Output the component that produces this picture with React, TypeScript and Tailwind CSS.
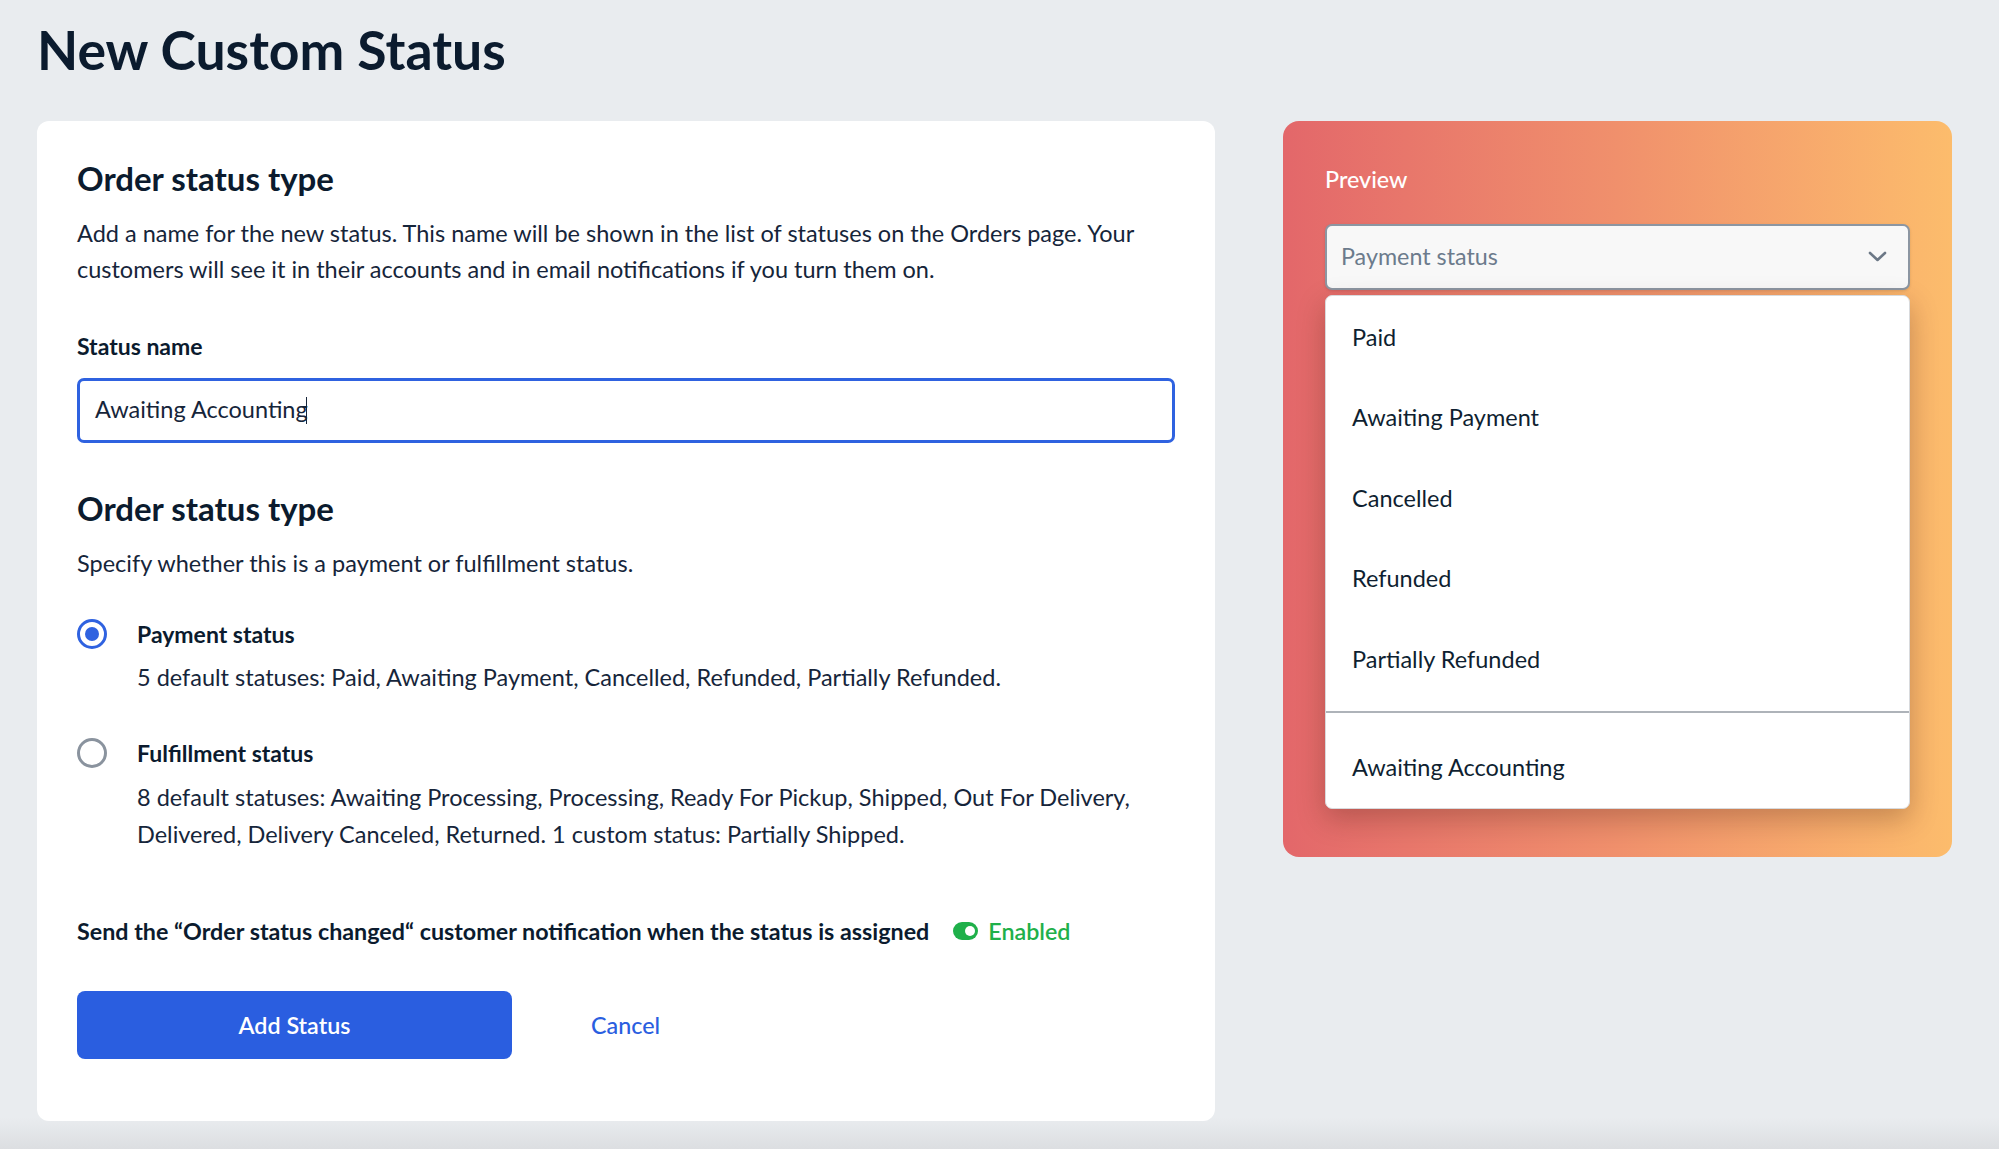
import React from "react";

const items = ["Paid", "Awaiting Payment", "Cancelled", "Refunded", "Partially Refunded"];

export default function App() {
  return (
    <div
      className="h-screen w-full overflow-hidden bg-[linear-gradient(to_bottom,#e9ecef_0%,#e9ecef_97.3%,#dcdee1_100%)] text-[#16253a]"
      style={{ fontFamily: "Lato, 'Open Sans', 'Liberation Sans', sans-serif" }}
    >
      <div className="pl-[37px] pt-[23px]">
        <h1 className="text-[53.5px] font-bold leading-none text-[#0b1b2e]">New Custom Status</h1>
      </div>

      <div className="mt-[44px] flex items-start gap-[68px] pl-[37px]">
        {/* Left card */}
        <div className="h-[1000px] w-[1178px] rounded-[12px] bg-white px-[40px] pt-[39px]">
          <h2 className="text-[33px] font-bold leading-[36px] text-[#0b1b2e]">Order status type</h2>
          <p className="mt-[19px] text-[23.5px] leading-[36px]">
            Add a name for the new status. This name will be shown in the list of statuses on the Orders page. Your
            customers will see it in their accounts and in email notifications if you turn them on.
          </p>

          <div className="mt-[41px] text-[23px] font-bold leading-[36px] text-[#0b1b2e]">Status name</div>
          <div className="mt-[14px] flex h-[65px] w-full items-center rounded-[7px] border-[3px] border-[#2f62e0] pl-[15px] text-[23.5px]">
            <span>Awaiting Accounting</span>
            <span className="-ml-[2px] inline-block h-[27px] w-[1.5px] bg-[#16253a]" />
          </div>

          <h2 className="mt-[47px] text-[33px] font-bold leading-[36px] text-[#0b1b2e]">Order status type</h2>
          <p className="mt-[19.5px] text-[23.5px] leading-[36px]">Specify whether this is a payment or fulfillment status.</p>

          {/* Radio 1 */}
          <div className="mt-[35px] flex items-start">
            <div className="flex h-[36px] w-[30px] items-center">
              <div className="flex h-[30px] w-[30px] items-center justify-center rounded-full border-[3px] border-[#2f62e0]">
                <div className="h-[14px] w-[14px] rounded-full bg-[#2f62e0]" />
              </div>
            </div>
            <div className="ml-[30px]">
              <div className="text-[23px] font-bold leading-[36px] text-[#0b1b2e]">Payment status</div>
              <div className="mt-[7px] text-[23.5px] leading-[36px]">
                5 default statuses: Paid, Awaiting Payment, Cancelled, Refunded, Partially Refunded.
              </div>
            </div>
          </div>

          {/* Radio 2 */}
          <div className="mt-[40px] flex items-start">
            <div className="flex h-[36px] w-[30px] items-center">
              <div className="h-[30px] w-[30px] rounded-full border-[3px] border-[#8a939e]" />
            </div>
            <div className="ml-[30px]">
              <div className="text-[23px] font-bold leading-[36px] text-[#0b1b2e]">Fulfillment status</div>
              <div className="mt-[8px] text-[23.5px] leading-[37px]">
                8 default statuses: Awaiting Processing, Processing, Ready For Pickup, Shipped, Out For Delivery,
                <br />
                Delivered, Delivery Canceled, Returned. 1 custom status: Partially Shipped.
              </div>
            </div>
          </div>

          <div className="mt-[60px] flex items-center">
            <span className="text-[23.3px] font-bold leading-[36px] text-[#0b1b2e]">
              Send the “Order status changed“ customer notification when the status is assigned
            </span>
            <span className="ml-[24px] flex h-[18px] w-[25px] items-center justify-end rounded-full bg-[#1fb04a] pr-[3.5px]">
              <span className="h-[10px] w-[10px] rounded-full bg-white" />
            </span>
            <span className="ml-[10px] text-[23.3px] font-semibold leading-[36px] text-[#1fb04a]">Enabled</span>
          </div>

          <div className="mt-[42px] flex items-center">
            <button className="flex h-[68px] w-[435px] items-center justify-center rounded-[8px] bg-[#2a5ee0] text-[23.3px] font-semibold text-white">
              Add Status
            </button>
            <button className="ml-[79px] text-[23.3px] font-medium text-[#2a5ee0]">Cancel</button>
          </div>
        </div>

        {/* Preview card */}
        <div className="w-[669px] rounded-[16px] bg-gradient-to-r from-[#e3676a] via-[#f0906c] to-[#fcbc6c] px-[42px] pb-[48px] pt-[40px]">
          <div className="text-[23.3px] font-medium leading-[36px] text-white">Preview</div>
          <div className="mt-[27px] flex h-[66px] items-center justify-between rounded-[7px] border-2 border-[#8c96a2] bg-[#f8f8f8] pl-[14px] pr-[21px] shadow-[0_1px_3px_rgba(0,0,0,0.12)]">
            <span className="text-[23.3px] text-[#6c7b8c]">Payment status</span>
            <svg width="19" height="11" viewBox="0 0 19 11" fill="none">
              <path d="M2 2l7.5 7 7.5-7" stroke="#6c7886" strokeWidth="2.6" strokeLinecap="round" strokeLinejoin="round" />
            </svg>
          </div>
          <div className="mt-[5px] overflow-hidden rounded-[7px] border border-[#d8dadd] bg-white shadow-[0_10px_28px_rgba(60,20,10,0.28)]">
            <div className="pb-[11.5px] pt-[1.5px]">
              {items.map((t) => (
                <div key={t} className="flex h-[80.5px] items-center pl-[26px] text-[23.5px] text-[#0f1f31]">
                  {t}
                </div>
              ))}
            </div>
            <div className="h-[2px] bg-[#aeb3b9]" />
            <div className="pt-[14.5px]">
              <div className="flex h-[80px] items-center pl-[26px] text-[23.5px] text-[#0f1f31]">Awaiting Accounting</div>
            </div>
          </div>
        </div>
      </div>
    </div>
  );
}
